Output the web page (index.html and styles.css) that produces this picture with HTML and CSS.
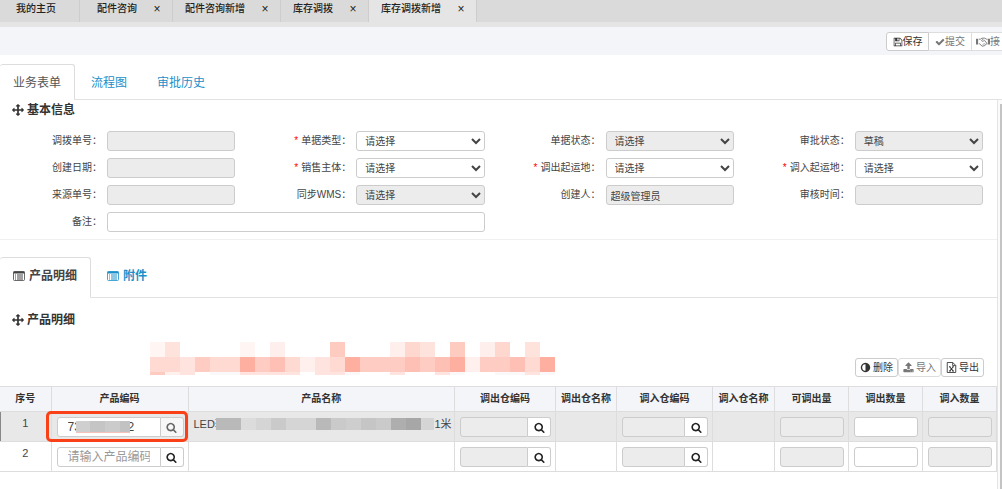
FILE: index.html
```html
<!DOCTYPE html>
<html lang="zh-CN">
<head>
<meta charset="utf-8">
<meta name="viewport" content="width=device-width, initial-scale=1">
<title>库存调拨新增</title>
<link rel="stylesheet" href="styles.css">
</head>
<body>
<svg class="sprite" aria-hidden="true">
  <symbol id="i-search" viewBox="0 0 1792 1792"><path d="M1216 832q0-185-131.500-316.500t-316.500-131.500-316.500 131.500-131.500 316.500 131.500 316.500 316.500 131.500 316.500-131.500 131.500-316.500zm512 832q0 52-38 90t-90 38q-54 0-90-38l-343-342q-179 124-399 124-143 0-273.500-55.500t-225-150-150-225-55.500-273.500 55.500-273.500 150-225 225-150 273.500-55.500 273.500 55.500 225 150 150 225 55.500 273.500q0 220-124 399l343 343q37 37 37 90z"/></symbol>
  <symbol id="i-move" viewBox="0 0 1792 1792"><path d="M1792 896q0 26-19 45l-256 256q-19 19-45 19t-45-19-19-45v-128h-384v384h128q26 0 45 19t19 45-19 45l-256 256q-19 19-45 19t-45-19l-256-256q-19-19-19-45t19-45 45-19h128v-384h-384v128q0 26-19 45t-45 19-45-19l-256-256q-19-19-19-45t19-45l256-256q19-19 45-19t45 19 19 45v128h384v-384h-128q-26 0-45-19t-19-45 19-45l256-256q19-19 45-19t45 19l256 256q19 19 19 45t-19 45-45 19h-128v384h384v-128q0-26 19-45t45-19 45 19l256 256q19 19 19 45z"/></symbol>
  <symbol id="i-check" viewBox="0 0 1792 1792"><path d="M1671 566q0 40-28 68l-724 724-136 136q-28 28-68 28t-68-28l-136-136-362-362q-28-28-28-68t28-68l136-136q28-28 68-28t68 28l294 295 656-657q28-28 68-28t68 28l136 136q28 28 28 68z"/></symbol>
  <symbol id="i-save" viewBox="0 0 1792 1792"><path d="M512 1536h768v-384h-768v384zm896 0h128v-896q0-14-10-38.500t-20-34.500l-281-281q-10-10-34-20t-39-10v416q0 40-28 68t-68 28h-576q-40 0-68-28t-28-68v-416h-128v1280h128v-416q0-40 28-68t68-28h832q40 0 68 28t28 68v416zm-384-928v-320q0-13-9.500-22.500t-22.500-9.500h-192q-13 0-22.500 9.500t-9.500 22.500v320q0 13 9.500 22.500t22.500 9.500h192q13 0 22.500-9.500t9.500-22.500zm640 32v928q0 40-28 68t-68 28h-1344q-40 0-68-28t-28-68v-1344q0-40 28-68t68-28h928q40 0 88 20t76 48l280 280q28 28 48 76t20 88z"/></symbol>
  <symbol id="i-adjust" viewBox="0 0 1792 1792"><path d="M896 1440v-1088q-148 0-273 73t-198 198-73 273 73 273 198 198 273 73zm768-544q0 209-103 385.500t-279.500 279.500-385.500 103-385.500-103-279.500-279.500-103-385.500 103-385.500 279.500-279.500 385.500-103 385.500 103 279.500 279.500 103 385.500z"/></symbol>
  <symbol id="i-upload" viewBox="0 0 1792 1792"><path d="M1344 1472q0-26-19-45t-45-19-45 19-19 45 19 45 45 19 45-19 19-45zm256 0q0-26-19-45t-45-19-45 19-19 45 19 45 45 19 45-19 19-45zm128-224v320q0 40-28 68t-68 28h-1472q-40 0-68-28t-28-68v-320q0-40 28-68t68-28h427q21 56 70.500 92t110.500 36h256q61 0 110.500-36t70.500-92h427q40 0 68 28t28 68zm-325-648q-17 40-59 40h-256v448q0 26-19 45t-45 19h-256q-26 0-45-19t-19-45v-448h-256q-42 0-59-40-17-39 14-69l448-448q18-19 45-19t45 19l448 448q31 30 14 69z"/></symbol>
  <symbol id="i-excel" viewBox="0 0 14 14"><path fill="none" stroke="currentColor" stroke-width="1.1" stroke-linejoin="round" d="M1.600 .6h7l3.800 3.800v9h-10.800zM8.500 .8v3.800h3.800"/><path fill="none" stroke="currentColor" stroke-width="1.300" d="M4.600 6l4.600 5.500M9.300 6l-4.600 5.500M3.800 11.500h2.400M7.800 11.500h2.400M3.800 6h2M8 6h2"/></symbol>
  <symbol id="i-shake" viewBox="0 0 20 14"><path fill="none" stroke="currentColor" stroke-width="1.300" stroke-linejoin="round" d="M4 3h2.500l2-1.500h4l2.500 1.500h1.500M4 9.500h1l3.500 3.200q1.500.8 2.500-.2q1.500.2 2-1.300q1.300 0 1.500-1.700h2M10.500 2.500l-2.500 2.700q.8 1.600 2.700.3l1.300-1l3.200 4M9.800 10.300l1.200 1.500M11.300 8.800l1.500 1.700"/><path d="M0 2.500h3v8h-3zM17 2.500h3v8h-3z"/></symbol>
  <symbol id="i-list" viewBox="0 0 24 20"><path fill="none" stroke="currentColor" stroke-width="1.600" d="M3 1h18q2 0 2 2v14q0 2-2 2h-18q-2 0-2-2v-14q0-2 2-2z"/><path d="M1 1h22v4h-22zM4 7h2v2h-2zM8 7h12v2h-12zM4 11h2v2h-2zM8 11h12v2h-12zM4 15h2v2h-2zM8 15h12v2h-12z"/></symbol>
</svg>

<nav class="pages">
  <div class="page page-home"><a href="#home">我的主页</a></div>
  <div class="page page-wide"><a href="#p1">配件咨询</a><button type="button" aria-label="关闭">×</button></div>
  <div class="page"><a href="#p2">配件咨询新增</a><button type="button" aria-label="关闭">×</button></div>
  <div class="page"><a href="#p3">库存调拨</a><button type="button" aria-label="关闭">×</button></div>
  <div class="page page-active"><a href="#p4">库存调拨新增</a><button type="button" aria-label="关闭">×</button></div>
</nav>

<div class="toolbar">
  <div class="btn-group">
    <button class="btn" type="button"><svg class="icon icon-10"><use href="#i-save"/></svg>保存</button>
    <button class="btn btn-muted" type="button"><svg class="icon icon-10"><use href="#i-check"/></svg>提交</button>
    <button class="btn btn-muted btn-cut" type="button"><svg class="icon icon-shake"><use href="#i-shake"/></svg>接</button>
  </div>
</div>

<ul class="tabs tabs-main">
  <li><a class="tab tab-on" href="#form">业务表单</a></li>
  <li><a class="tab" href="#flow">流程图</a></li>
  <li><a class="tab" href="#history">审批历史</a></li>
</ul>

<div class="scroller">
<main class="content">
  <h2 class="title"><svg class="icon icon-12"><use href="#i-move"/></svg>基本信息</h2>
  <form class="fields">
    <div class="field"><label for="no">调拨单号：</label><input id="no" class="ctl" type="text" disabled></div>
    <div class="field"><label for="type"><i class="req">*</i>单据类型：</label><select id="type" class="ctl"><option>请选择</option></select></div>
    <div class="field"><label for="state">单据状态：</label><select id="state" class="ctl" disabled><option>请选择</option></select></div>
    <div class="field"><label for="audit">审批状态：</label><select id="audit" class="ctl" disabled><option>草稿</option></select></div>

    <div class="field"><label for="date">创建日期：</label><input id="date" class="ctl" type="text" disabled></div>
    <div class="field"><label for="org"><i class="req">*</i>销售主体：</label><select id="org" class="ctl"><option>请选择</option></select></div>
    <div class="field"><label for="from"><i class="req">*</i>调出起运地：</label><select id="from" class="ctl"><option>请选择</option></select></div>
    <div class="field"><label for="to"><i class="req">*</i>调入起运地：</label><select id="to" class="ctl"><option>请选择</option></select></div>

    <div class="field"><label for="src">来源单号：</label><input id="src" class="ctl" type="text" disabled></div>
    <div class="field"><label for="wms">同步WMS：</label><select id="wms" class="ctl" disabled><option>请选择</option></select></div>
    <div class="field"><label for="by">创建人：</label><input id="by" class="ctl" type="text" value="超级管理员" disabled></div>
    <div class="field"><label for="time">审核时间：</label><input id="time" class="ctl" type="text" disabled></div>

    <div class="field field-wide"><label for="memo">备注：</label><input id="memo" class="ctl" type="text"></div>
  </form>

  <ul class="tabs tabs-sub">
    <li><a class="tab tab-on" href="#detail"><svg class="icon icon-list"><use href="#i-list"/></svg>产品明细</a></li>
    <li><a class="tab" href="#files"><svg class="icon icon-list"><use href="#i-list"/></svg>附件</a></li>
  </ul>

  <h2 class="title title-sub"><svg class="icon icon-12"><use href="#i-move"/></svg>产品明细</h2>

  <div class="actions">
    <svg class="redacted" width="405" height="33" shape-rendering="crispEdges" aria-hidden="true">
      <path fill="#fff6f4" d="M0 0h15v15h-15zM90 0h15v15h-15z"/>
      <path fill="#fee3dd" d="M15 0h15v15h-15zM375 0h15v15h-15zM270 0h15v15h-15z"/>
      <path fill="#ffefec" d="M120 0h15v15h-15zM240 0h15v15h-15zM330 0h15v15h-15z"/>
      <path fill="#fecbc1" d="M180 0h15v15h-15zM300 0h15v15h-15z"/>
      <path fill="#fed7cf" d="M255 0h15v15h-15zM345 0h15v15h-15z"/>
      <path fill="#fedad3" d="M0 15h15v15h-15zM15 15h15v15h-15zM60 15h30v15h-30zM135 15h15v15h-15zM180 15h15v15h-15zM375 15h15v15h-15z"/>
      <path fill="#fee3de" d="M30 15h15v15h-15zM165 15h15v15h-15z"/>
      <path fill="#feccc2" d="M45 15h15v15h-15zM105 15h15v15h-15zM210 15h45v15h-45zM270 15h15v15h-15zM330 15h30v15h-30z"/>
      <path fill="#feaf9f" d="M90 15h15v15h-15zM195 15h15v15h-15zM300 15h15v15h-15zM390 15h15v15h-15z"/>
      <path fill="#fec0b4" d="M120 15h15v15h-15zM255 15h15v15h-15zM285 15h15v15h-15zM360 15h15v15h-15z"/>
      <path fill="#fff0ed" d="M150 15h15v15h-15zM315 15h15v15h-15zM15 30h15v3h-15z"/>
      <path fill="#fecbc1" d="M0 30h15v3h-15z"/>
      <path fill="#fee3de" d="M30 30h15v3h-15zM90 30h60v3h-60zM165 30h30v3h-30zM240 30h15v3h-15zM285 30h15v3h-15zM375 30h15v3h-15z"/>
      <path fill="#faf8f8" d="M60 30h30v3h-30zM195 30h15v3h-15zM300 30h15v3h-15zM345 30h30v3h-30zM390 30h15v3h-15z"/>
    </svg>
    <div class="action-btns">
      <button class="btn" type="button"><svg class="icon icon-11"><use href="#i-adjust"/></svg>删除</button>
      <button class="btn btn-muted" type="button"><svg class="icon icon-11"><use href="#i-upload"/></svg>导入</button>
      <button class="btn" type="button"><svg class="icon icon-11"><use href="#i-excel"/></svg>导出</button>
    </div>
  </div>

  <table class="grid">
    <colgroup><col class="c-no"><col class="c-code"><col><col class="c-wh"><col class="c-out"><col class="c-whin"><col class="c-in"><col class="c-qty"><col class="c-qty"><col class="c-qty"></colgroup>
    <thead>
      <tr><th>序号</th><th>产品编码</th><th>产品名称</th><th>调出仓编码</th><th>调出仓名称</th><th>调入仓编码</th><th>调入仓名称</th><th>可调出量</th><th>调出数量</th><th>调入数量</th></tr>
    </thead>
    <tbody>
      <tr class="row-on">
        <td class="num">1</td>
        <td class="marked">
          <div class="lookup code"><input class="ctl" type="text" aria-label="产品编码" value="73&#160;&#160;&#160;&#160;&#160;&#160;&#160;&#160;&#160;&#160;&#160;&#160;&#160;&#160;2"><button class="pick pick-soft" type="button" aria-label="查找产品"><svg class="icon icon-11"><use href="#i-search"/></svg></button>
            <svg class="code-mask" width="54" height="12" shape-rendering="crispEdges" aria-hidden="true"><path fill="#cfcfcf" d="M0 0h14v12h-14z"/><path fill="#c5c5c5" d="M14 0h15v12h-15z"/><path fill="#cbcbcb" d="M29 0h15v12h-15z"/><path fill="#c2c2c2" d="M44 0h10v12h-10z"/><path fill="#f3c3b9" d="M0 11h54v1h-54z"/></svg>
          </div>
        </td>
        <td>
          <div class="name"><span class="name-head">LED轨</span><svg width="218" height="12" shape-rendering="crispEdges" aria-hidden="true"><path fill="#b9b9b9" d="M0 0h25v12h-25zM100 0h15v12h-15z"/><path fill="#dcdcdc" d="M25 0h15v12h-15z"/><path fill="#d5d5d5" d="M40 0h15v12h-15zM70 0h30v12h-30zM205 0h13v12h-13z"/><path fill="#cacaca" d="M55 0h15v12h-15zM115 0h15v12h-15zM160 0h15v12h-15z"/><path fill="#cecece" d="M130 0h15v12h-15z"/><path fill="#c5c5c5" d="M145 0h15v12h-15z"/><path fill="#aeaeae" d="M175 0h15v12h-15z"/><path fill="#a7a7a7" d="M190 0h15v12h-15z"/></svg><span>1米</span></div>
        </td>
        <td><div class="lookup"><input class="ctl" type="text" aria-label="调出仓编码" disabled><button class="pick" type="button" aria-label="查找调出仓"><svg class="icon icon-11"><use href="#i-search"/></svg></button></div></td>
        <td></td>
        <td><div class="lookup"><input class="ctl" type="text" aria-label="调入仓编码" disabled><button class="pick" type="button" aria-label="查找调入仓"><svg class="icon icon-11"><use href="#i-search"/></svg></button></div></td>
        <td></td>
        <td><input class="ctl" type="text" aria-label="可调出量" disabled></td>
        <td><input class="ctl" type="text" aria-label="调出数量"></td>
        <td><input class="ctl" type="text" aria-label="调入数量" disabled></td>
      </tr>
      <tr>
        <td class="num">2</td>
        <td><div class="lookup code"><input class="ctl" type="text" aria-label="产品编码" placeholder="请输入产品编码"><button class="pick" type="button" aria-label="查找产品"><svg class="icon icon-11"><use href="#i-search"/></svg></button></div></td>
        <td></td>
        <td><div class="lookup"><input class="ctl" type="text" aria-label="调出仓编码" disabled><button class="pick" type="button" aria-label="查找调出仓"><svg class="icon icon-11"><use href="#i-search"/></svg></button></div></td>
        <td></td>
        <td><div class="lookup"><input class="ctl" type="text" aria-label="调入仓编码" disabled><button class="pick" type="button" aria-label="查找调入仓"><svg class="icon icon-11"><use href="#i-search"/></svg></button></div></td>
        <td></td>
        <td><input class="ctl" type="text" aria-label="可调出量" disabled></td>
        <td><input class="ctl" type="text" aria-label="调出数量"></td>
        <td><input class="ctl" type="text" aria-label="调入数量" disabled></td>
      </tr>
    </tbody>
  </table>
</main>
<div class="thumb"></div>
</div>
</body>
</html>
```
FILE: styles.css
```css
* { box-sizing: border-box; }

html, body { height: 100%; }

body {
  margin: 0;
  display: flex;
  flex-direction: column;
  overflow: hidden;
  background: #fff;
  color: #444;
  font: 10px/16px "Liberation Sans", "Noto Sans CJK SC", sans-serif;
}

button, input, select { font: inherit; color: inherit; margin: 0; }
a { color: inherit; text-decoration: none; }

.sprite { position: absolute; width: 0; height: 0; }
.icon { flex: none; fill: currentColor; }
.icon-10 { width: 10px; height: 10px; }
.icon-11 { width: 11px; height: 11px; }
.icon-12 { width: 12px; height: 12px; }
.icon-list { width: 12px; height: 10px; }
.icon-shake { width: 14px; height: 10px; }

/* Open pages */
.pages {
  display: flex;
  flex: none;
  background: #dadada;
  border-bottom: 5px solid #e5e5e5;
  color: #222;
  font-weight: 500;
}
.page {
  display: flex;
  justify-content: space-between;
  gap: 15px;
  height: 22px;
  padding: 1px 10px 0 12px;
  border-right: 1px solid #cdcdcd;
}
.page-home { padding: 1px 23px 0 16px; }
.page-wide { padding-left: 17px; }
.page-active { background: #e5e5e5; }
.page button {
  width: 10px;
  height: 16px;
  padding: 0;
  border: 0;
  background: none;
  font-size: 12px;
  line-height: 16px;
}

/* Toolbar */
.toolbar {
  display: flex;
  flex: none;
  justify-content: flex-end;
  height: 28px;
  padding-top: 5px;
  background: #f4f5f9;
}
.btn-group { display: flex; width: 116px; overflow: hidden; }
.btn {
  display: flex;
  flex: none;
  align-items: center;
  justify-content: center;
  gap: 2px;
  width: 43px;
  height: 19px;
  padding: 0;
  border: 1px solid #ccc;
  border-radius: 3px;
  background: #fff;
  color: #333;
  white-space: nowrap;
}
.btn-muted { color: #777; border-color: #ddd; }
.btn-group .btn { gap: 0; border-radius: 0; }
.btn-group .btn:first-child { border-radius: 3px 0 0 3px; }
.btn-group .btn-muted { border-left: 0; }
.btn-group .btn-cut { justify-content: flex-start; padding-left: 4px; }

/* Tabs */
.tabs {
  display: flex;
  flex: none;
  margin: 0;
  padding: 0;
  list-style: none;
  border-bottom: 1px solid #e2e2e2;
  color: #1b8fc9;
  font-size: 12px;
}
.tab {
  display: flex;
  align-items: center;
  gap: 4px;
  height: 35px;
  margin-bottom: -1px;
  padding: 0 14px;
  border: 1px solid transparent;
  border-radius: 3px 3px 0 0;
}
.tab-on {
  margin-right: 1px;
  padding: 0 13px;
  border-color: #ddd #ddd #fff;
  border-left-width: 0;
  background: #fff;
  color: #555;
}
.tabs-main { margin-top: 9px; }
.tabs-main .tab { height: 36px; padding-top: 2px; }
.tabs-sub { font-weight: 700; }
.tabs-sub .tab { height: 41px; padding-bottom: 4px; }
.tabs-sub .tab-on { color: #444; }

/* Scrolling content */
.scroller {
  display: flex;
  flex: 1;
  min-height: 0;
  background: #fbfbfb;
}
.content {
  flex: 1;
  min-width: 0;
  background: #fff;
  border-right: 1px solid #e4e4e4;
}
.thumb {
  width: 2px;
  margin: 4px 0 0 2px;
  background: #c4c4c4;
}
.title {
  display: flex;
  align-items: center;
  gap: 3px;
  margin: 0;
  padding: 0 12px;
  font-size: 12px;
  line-height: 20px;
  font-weight: 700;
  color: #333;
}
.title-sub { padding-top: 12px; }

/* Form */
.fields {
  display: grid;
  grid-template-columns: repeat(4, 1fr);
  row-gap: 7px;
  padding: 11px 0 7px;
  border-bottom: 1px solid #f0f0f0;
  margin-bottom: 17px;
}
.field { display: flex; padding-right: 14px; }
.field-wide { grid-column: span 2; }
.field label {
  flex: none;
  width: 107px;
  padding-right: 5px;
  text-align: right;
  line-height: 20px;
}
.req { margin-right: 3px; color: #f00; font-style: normal; }
.ctl {
  display: block;
  flex: 1;
  width: 100%;
  min-width: 0;
  height: 20px;
  padding: 0 4px;
  border: 1px solid #ccc;
  border-radius: 3px;
  background: #fff;
  outline: 0;
}
.ctl:disabled { background: #ececec; color: #444; opacity: 1; }
select.ctl { padding: 0 4px; }

/* Detail actions */
.actions {
  display: flex;
  align-items: flex-start;
  justify-content: space-between;
  padding: 12px 13px 11px 150px;
}
.redacted { display: block; }
.action-btns { display: flex; padding-top: 16px; margin-bottom: -2px; }

/* Detail table */
.grid {
  width: 100%;
  table-layout: fixed;
  border-collapse: collapse;
}
.c-no { width: 51px; }
.c-code { width: 137px; }
.c-wh { width: 101px; }
.c-out { width: 61px; }
.c-whin { width: 96px; }
.c-in { width: 62px; }
.c-qty { width: 74px; }
.grid th, .grid td { border: 1px solid #ddd; padding: 0; }
.grid th:first-child, .grid td:first-child { border-left: 0; }
.grid th {
  height: 25px;
  background: #f4f5f9;
  color: #333;
  font-weight: 700;
  white-space: nowrap;
}
.grid td { height: 30px; padding: 5px 4px 4px 5px; vertical-align: top; font-size: 11px; }
.grid .num { padding: 3px 0; text-align: center; }
.row-on { background: #e8e8e8; }
.row-on .num { box-shadow: inset 1px 0 #888; }
.lookup { display: flex; }
.lookup .ctl { border-radius: 3px 0 0 3px; }
.code .ctl { padding: 0 10px; font-size: 12px; }
.code .ctl::placeholder { color: #999; }
.pick {
  display: flex;
  align-items: center;
  justify-content: center;
  width: 23px;
  height: 20px;
  padding: 0;
  border: 1px solid #ccc;
  border-left: 0;
  border-radius: 0 3px 3px 0;
  background: #fff;
  color: #222;
}
.pick-soft { background: #f7f7f7; color: #666; }
.name { display: flex; align-items: center; height: 14px; white-space: nowrap; }
.name-head { width: 22px; }
.name svg { flex: none; z-index: 1; margin-right: 1px; }
.marked { position: relative; }
.marked::after {
  content: "";
  position: absolute;
  inset: -1px 0 -1px -6px;
  border: 3px solid #fa4016;
  border-radius: 5px;
  pointer-events: none;
}
.code { position: relative; }
.code-mask { position: absolute; left: 19px; top: 4px; }
```
